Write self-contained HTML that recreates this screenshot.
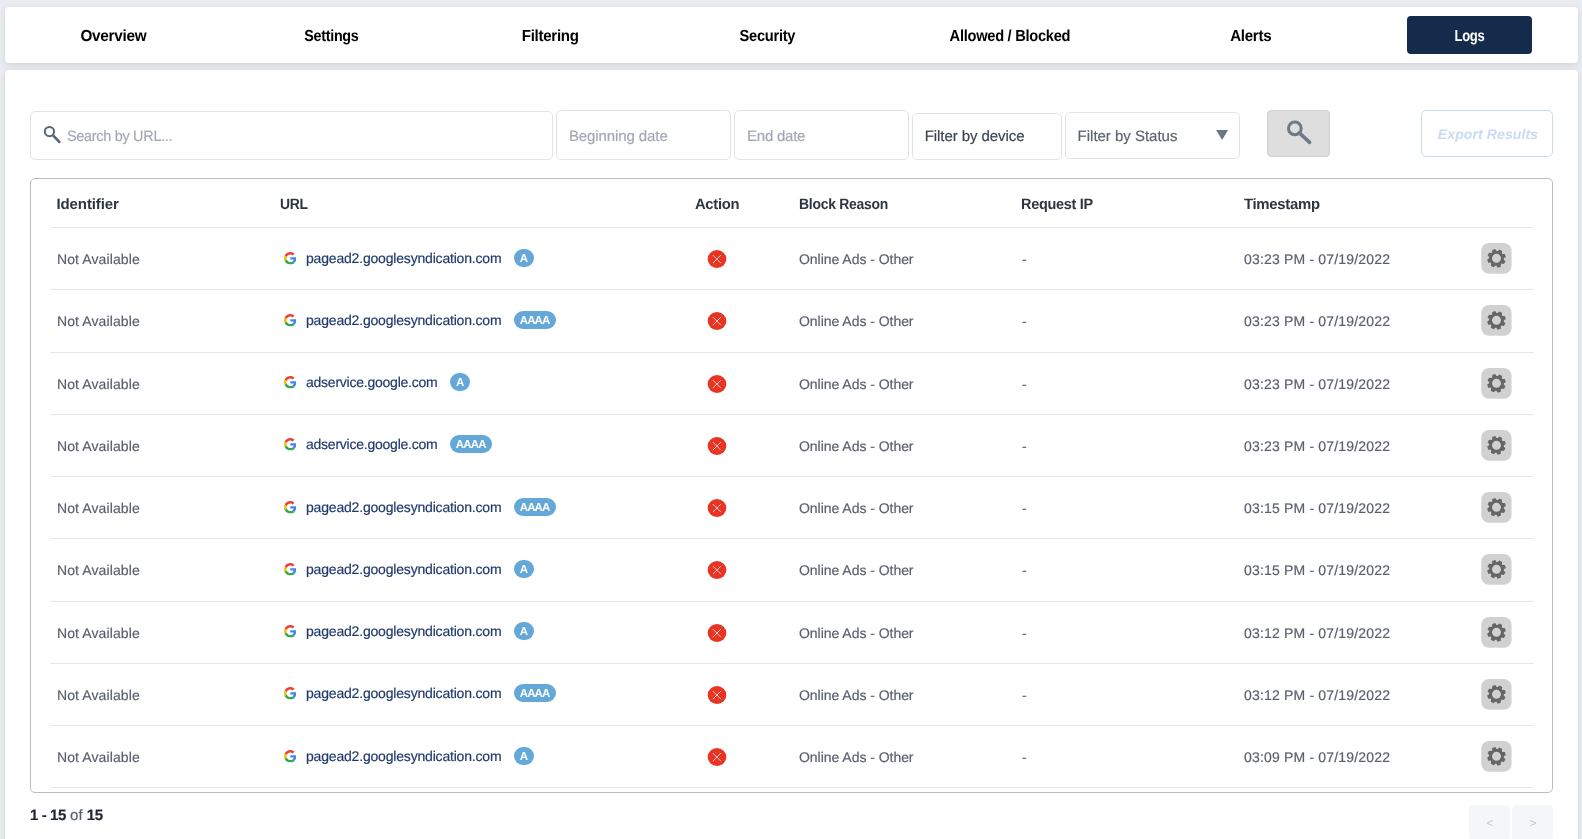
<!DOCTYPE html>
<html lang="en"><head><meta charset="utf-8"><title>Logs</title>
<style>
*{box-sizing:border-box}
html,body{margin:0;padding:0}
body{text-rendering:geometricPrecision;width:1582px;height:839px;overflow:hidden;position:relative;background:#e9edf1;font-family:"Liberation Sans",sans-serif;color:#555b69;font-size:14px}
.card{will-change:transform;position:absolute;background:#fff;border-radius:4px;box-shadow:0 2px 6px rgba(50,60,80,.14)}
.nav{left:5px;top:7px;width:1573px;height:55.5px}
.main{left:5px;top:70px;width:1573px;height:800px}
.main>*{margin-left:-5px;margin-top:-70px}
.tab{position:absolute;top:9px;height:37.5px;border-radius:4px;display:flex;align-items:center;justify-content:center;font-weight:bold;font-size:16px;color:#000;white-space:nowrap;padding-top:5px}
.tab.active{background:#152b4b;color:#fff}
.inp{position:absolute;border:1px solid #e0e4e8;border-radius:5px;background:#fff}
.ph{position:absolute;line-height:18px;font-size:15px;color:#a4a7b4;white-space:nowrap}
.ph.dev{color:#3b4350}
.ph.sta{color:#5c6370}
.sbtn{position:absolute;left:1267px;top:110px;width:63px;height:47px;background:#dedede;border:1px solid #cbd2d8;border-radius:4px;display:flex;align-items:center;justify-content:center}
.ebtn{position:absolute;left:1421px;top:110px;width:132px;height:47px;border:1px solid #c9dcf7;border-radius:5px;display:flex;align-items:center;justify-content:center;padding-left:2px;color:#cadaf4;font-weight:bold;font-style:italic;font-size:14px;white-space:nowrap}
.tbl{position:absolute;left:30px;top:178px;width:1523px;height:615px;border:1px solid #bcbcbc;border-radius:5px;overflow:hidden}
.tbl>*{margin-left:-31px;margin-top:-179px}
.th{position:absolute;top:196px;font-weight:bold;font-size:15px;color:#2c3541;white-space:nowrap;line-height:18px}
.hr{position:absolute;left:50px;width:1484px;height:1px;background:#e6e6e6}
.row{position:absolute;left:0;width:1582px;height:0}
.td{position:absolute;top:-9px;line-height:18px;font-size:14px;white-space:nowrap;color:#595f6d}
.td.url{left:306px;color:#1f3a6d}
.g{position:absolute;left:283.6px;width:12.6px;height:12.6px}
.badge{-webkit-text-stroke:0;position:absolute;top:0;margin-left:12.6px;height:18px;width:20px;border-radius:9px;background:#63a8d8;color:#fff;font-size:11.5px;font-weight:bold;line-height:20.6px;overflow:hidden;text-align:center}
.badge.b4{width:42px;letter-spacing:-0.85px;text-indent:-0.8px}
.x{position:absolute;left:707.3px;top:-9.9px;width:20px;height:20px}
.x svg{display:block}
.gb{position:absolute;left:1481px;display:block}
.cnt{position:absolute;left:30px;top:807px;font-size:15px;color:#5a6070;line-height:18px;white-space:nowrap}
.cnt .b{color:#1f2630;font-weight:bold}
.pg{position:absolute;top:805px;width:41px;height:35px;background:#f5f6f8;border-radius:4px;color:#c3c6cd;font-size:12px;text-align:center;line-height:36px;text-indent:1px}
span{transform-origin:left center}
.tab span{transform-origin:center center}
.ebtn span{transform-origin:center center}
.ico{position:absolute;display:block}
.td,.ph,.cnt{-webkit-text-stroke:.18px currentColor}

</style></head>
<body>
<svg width="0" height="0" style="position:absolute"><defs>
<symbol id="gear" viewBox="0 0 20 20"><path fill-rule="evenodd" d="M11.28 2.71 L12.84 1.04 L15.71 2.53 L15.24 4.77 L16.06 5.75 L18.35 5.67 L19.32 8.76 L17.40 10.01 L17.29 11.28 L18.96 12.84 L17.47 15.71 L15.23 15.24 L14.25 16.06 L14.33 18.35 L11.24 19.32 L9.99 17.40 L8.72 17.29 L7.16 18.96 L4.29 17.47 L4.76 15.23 L3.94 14.25 L1.65 14.33 L0.68 11.24 L2.60 9.99 L2.71 8.72 L1.04 7.16 L2.53 4.29 L4.77 4.76 L5.75 3.94 L5.67 1.65 L8.76 0.68 L10.01 2.60Z M5.50 10.00 a4.5 4.5 0 1 0 9.0 0 a4.5 4.5 0 1 0 -9.0 0Z"/></symbol>
<symbol id="goog" viewBox="0 0 48 48">
<path fill="#EA4335" d="M24 9.5c3.54 0 6.71 1.22 9.21 3.6l6.85-6.85C35.9 2.38 30.47 0 24 0 14.62 0 6.51 5.38 2.56 13.22l7.98 6.19C12.43 13.72 17.74 9.5 24 9.5z"/>
<path fill="#4285F4" d="M46.98 24.55c0-1.57-.15-3.09-.38-4.55H24v9.02h12.94c-.58 2.96-2.26 5.48-4.78 7.18l7.73 6c4.51-4.18 7.09-10.36 7.09-17.65z"/>
<path fill="#FBBC05" d="M10.53 28.59c-.48-1.45-.76-2.99-.76-4.59s.27-3.14.76-4.59l-7.98-6.19C.92 16.46 0 20.12 0 24c0 3.88.92 7.54 2.56 10.78l7.97-6.19z"/>
<path fill="#34A853" d="M24 48c6.48 0 11.93-2.13 15.89-5.81l-7.73-6c-2.15 1.45-4.92 2.3-8.16 2.3-6.26 0-11.57-4.22-13.47-9.91l-7.98 6.19C6.51 42.62 14.62 48 24 48z"/>
</symbol>
</defs></svg>
<div class="card nav">
<div class="tab" style="left:46.1px;width:125px"><span style="letter-spacing:-0.300px;display:inline-block;transform:scaleX(0.9570);">Overview</span></div>
<div class="tab" style="left:264.3px;width:125px"><span style="letter-spacing:-0.300px;display:inline-block;transform:scaleX(0.8958);">Settings</span></div>
<div class="tab" style="left:482.7px;width:125px"><span style="letter-spacing:-0.300px;display:inline-block;transform:scaleX(0.9419);">Filtering</span></div>
<div class="tab" style="left:700.3px;width:125px"><span style="letter-spacing:-0.300px;display:inline-block;transform:scaleX(0.9154);">Security</span></div>
<div class="tab" style="left:942.0px;width:125px"><span style="letter-spacing:-0.300px;display:inline-block;transform:scaleX(0.9149);">Allowed / Blocked</span></div>
<div class="tab" style="left:1183.1px;width:125px"><span style="letter-spacing:-0.300px;display:inline-block;transform:scaleX(0.9435);">Alerts</span></div>
<div class="tab active" style="left:1402.0px;width:125px"><span style="letter-spacing:-0.300px;display:inline-block;transform:scaleX(0.8158);">Logs</span></div>
</div>
<div class="card main">
<div class="inp" style="left:30px;top:111px;width:523px;height:49px"><span class="ph" style="left:36.3px;top:15.6px;letter-spacing:-0.300px;display:inline-block;transform:scaleX(0.9624);">Search by URL...</span></div>
<div class="inp" style="left:556px;top:110px;width:175px;height:50px"><span class="ph" style="left:11.9px;top:16.6px;letter-spacing:-0.092px;">Beginning date</span></div>
<div class="inp" style="left:734px;top:110px;width:175px;height:50px"><span class="ph" style="left:12.0px;top:16.6px;letter-spacing:-0.233px;">End date</span></div>
<div class="inp" style="left:912px;top:113px;width:150px;height:47px"><span class="ph dev" style="left:11.7px;top:13.7px;letter-spacing:-0.067px;">Filter by device</span></div>
<div class="inp" style="left:1065px;top:112px;width:175px;height:47px"><span class="ph sta" style="left:11.6px;top:14.7px;letter-spacing:-0.015px;">Filter by Status</span></div>
<div class="sbtn"></div>
<div class="ebtn"><span style="letter-spacing:0.106px;">Export Results</span></div>
<svg class="ico" style="left:38px;top:120px" width="30" height="30" viewBox="0 0 30 30"><circle cx="11.45" cy="11.55" r="4.65" fill="none" stroke="#5a6876" stroke-width="2"/><path d="M15.1 15.3 L21.3 21.9" stroke="#5a6876" stroke-width="2.7" stroke-linecap="round"/></svg>
<svg class="ico" style="left:1279px;top:113px" width="40" height="40" viewBox="0 0 40 40"><circle cx="15.85" cy="15.4" r="6.35" fill="none" stroke="#6d7a88" stroke-width="3"/><path d="M20.3 19.9 L30.6 29.4" stroke="#6d7a88" stroke-width="3.6" stroke-linecap="round"/></svg>
<svg class="ico" style="left:1207px;top:121px" width="30" height="30" viewBox="0 0 30 30"><path d="M9.1 9 L21.1 9 L15.1 19 Z" fill="#6b7785"/></svg>
<div class="tbl">
<span class="th" style="left:56.5px;letter-spacing:-0.114px;">Identifier</span>
<span class="th" style="left:279.5px;letter-spacing:-0.300px;display:inline-block;transform:scaleX(0.9289);">URL</span>
<span class="th" style="left:695px;letter-spacing:-0.300px;display:inline-block;transform:scaleX(0.9850);">Action</span>
<span class="th" style="left:798.7px;letter-spacing:-0.300px;display:inline-block;transform:scaleX(0.9309);">Block Reason</span>
<span class="th" style="left:1021.3px;letter-spacing:-0.300px;display:inline-block;transform:scaleX(0.9634);">Request IP</span>
<span class="th" style="left:1243.7px;letter-spacing:-0.300px;display:inline-block;transform:scaleX(0.9932);">Timestamp</span>
<div class="hr" style="top:227px"></div>
<div class="row" style="top:258.6px"><span class="td" style="left:57px;top:-8.65px;letter-spacing:0.102px;">Not Available</span><svg class="g" style="top:-6.20px"><use href="#goog"/></svg><span class="td url" style="top:-9.65px;"><span class="u" style="letter-spacing:-0.187px;">pagead2.googlesyndication.com</span><span class="badge">A</span></span><span class="x" style="top:-9.90px"><svg viewBox="0 0 20 20" width="20" height="20"><ellipse cx="10" cy="10" rx="9.35" ry="8.9" fill="#e83422"/><path d="M5.9 6.1 L13.9 14.1 M13.9 6.1 L5.9 14.1" stroke="#fff" stroke-opacity=".85" stroke-width=".9"/></svg></span><span class="td" style="left:799px;top:-8.65px;letter-spacing:-0.037px;">Online Ads - Other</span><span class="td" style="left:1022px;top:-8.65px;">-</span><span class="td" style="left:1244px;top:-8.65px;letter-spacing:0.174px;">03:23 PM - 07/19/2022</span><svg class="gb" style="top:-15.65px" width="32" height="33" viewBox="0 0 32 33"><rect x="0.25" y="0.05" width="30.3" height="30.7" rx="7.8" fill="#d1d1d1"/><use href="#gear" x="5.5" y="5.35" width="20" height="20" fill="#666"/></svg></div>
<div class="hr" style="top:289px"></div>
<div class="row" style="top:320.9px"><span class="td" style="left:57px;top:-8.95px;letter-spacing:0.102px;">Not Available</span><svg class="g" style="top:-6.50px"><use href="#goog"/></svg><span class="td url" style="top:-9.95px;"><span class="u" style="letter-spacing:-0.187px;">pagead2.googlesyndication.com</span><span class="badge b4">AAAA</span></span><span class="x" style="top:-10.20px"><svg viewBox="0 0 20 20" width="20" height="20"><ellipse cx="10" cy="10" rx="9.35" ry="8.9" fill="#e83422"/><path d="M5.9 6.1 L13.9 14.1 M13.9 6.1 L5.9 14.1" stroke="#fff" stroke-opacity=".85" stroke-width=".9"/></svg></span><span class="td" style="left:799px;top:-8.95px;letter-spacing:-0.037px;">Online Ads - Other</span><span class="td" style="left:1022px;top:-8.95px;">-</span><span class="td" style="left:1244px;top:-8.95px;letter-spacing:0.174px;">03:23 PM - 07/19/2022</span><svg class="gb" style="top:-15.95px" width="32" height="33" viewBox="0 0 32 33"><rect x="0.25" y="0.05" width="30.3" height="30.7" rx="7.8" fill="#d1d1d1"/><use href="#gear" x="5.5" y="5.35" width="20" height="20" fill="#666"/></svg></div>
<div class="hr" style="top:352px"></div>
<div class="row" style="top:383.2px"><span class="td" style="left:57px;top:-8.25px;letter-spacing:0.102px;">Not Available</span><svg class="g" style="top:-6.80px"><use href="#goog"/></svg><span class="td url" style="top:-10.25px;"><span class="u" style="letter-spacing:-0.234px;">adservice.google.com</span><span class="badge">A</span></span><span class="x" style="top:-9.50px"><svg viewBox="0 0 20 20" width="20" height="20"><ellipse cx="10" cy="10" rx="9.35" ry="8.9" fill="#e83422"/><path d="M5.9 6.1 L13.9 14.1 M13.9 6.1 L5.9 14.1" stroke="#fff" stroke-opacity=".85" stroke-width=".9"/></svg></span><span class="td" style="left:799px;top:-8.25px;letter-spacing:-0.037px;">Online Ads - Other</span><span class="td" style="left:1022px;top:-8.25px;">-</span><span class="td" style="left:1244px;top:-8.25px;letter-spacing:0.174px;">03:23 PM - 07/19/2022</span><svg class="gb" style="top:-15.25px" width="32" height="33" viewBox="0 0 32 33"><rect x="0.25" y="0.05" width="30.3" height="30.7" rx="7.8" fill="#d1d1d1"/><use href="#gear" x="5.5" y="5.35" width="20" height="20" fill="#666"/></svg></div>
<div class="hr" style="top:414px"></div>
<div class="row" style="top:445.5px"><span class="td" style="left:57px;top:-8.55px;letter-spacing:0.102px;">Not Available</span><svg class="g" style="top:-7.10px"><use href="#goog"/></svg><span class="td url" style="top:-10.55px;"><span class="u" style="letter-spacing:-0.234px;">adservice.google.com</span><span class="badge b4">AAAA</span></span><span class="x" style="top:-9.80px"><svg viewBox="0 0 20 20" width="20" height="20"><ellipse cx="10" cy="10" rx="9.35" ry="8.9" fill="#e83422"/><path d="M5.9 6.1 L13.9 14.1 M13.9 6.1 L5.9 14.1" stroke="#fff" stroke-opacity=".85" stroke-width=".9"/></svg></span><span class="td" style="left:799px;top:-8.55px;letter-spacing:-0.037px;">Online Ads - Other</span><span class="td" style="left:1022px;top:-8.55px;">-</span><span class="td" style="left:1244px;top:-8.55px;letter-spacing:0.174px;">03:23 PM - 07/19/2022</span><svg class="gb" style="top:-15.55px" width="32" height="33" viewBox="0 0 32 33"><rect x="0.25" y="0.05" width="30.3" height="30.7" rx="7.8" fill="#d1d1d1"/><use href="#gear" x="5.5" y="5.35" width="20" height="20" fill="#666"/></svg></div>
<div class="hr" style="top:476px"></div>
<div class="row" style="top:507.8px"><span class="td" style="left:57px;top:-8.85px;letter-spacing:0.102px;">Not Available</span><svg class="g" style="top:-6.40px"><use href="#goog"/></svg><span class="td url" style="top:-9.85px;"><span class="u" style="letter-spacing:-0.187px;">pagead2.googlesyndication.com</span><span class="badge b4">AAAA</span></span><span class="x" style="top:-10.10px"><svg viewBox="0 0 20 20" width="20" height="20"><ellipse cx="10" cy="10" rx="9.35" ry="8.9" fill="#e83422"/><path d="M5.9 6.1 L13.9 14.1 M13.9 6.1 L5.9 14.1" stroke="#fff" stroke-opacity=".85" stroke-width=".9"/></svg></span><span class="td" style="left:799px;top:-8.85px;letter-spacing:-0.037px;">Online Ads - Other</span><span class="td" style="left:1022px;top:-8.85px;">-</span><span class="td" style="left:1244px;top:-8.85px;letter-spacing:0.174px;">03:15 PM - 07/19/2022</span><svg class="gb" style="top:-15.85px" width="32" height="33" viewBox="0 0 32 33"><rect x="0.25" y="0.05" width="30.3" height="30.7" rx="7.8" fill="#d1d1d1"/><use href="#gear" x="5.5" y="5.35" width="20" height="20" fill="#666"/></svg></div>
<div class="hr" style="top:538px"></div>
<div class="row" style="top:570.1px"><span class="td" style="left:57px;top:-9.15px;letter-spacing:0.102px;">Not Available</span><svg class="g" style="top:-6.70px"><use href="#goog"/></svg><span class="td url" style="top:-10.15px;"><span class="u" style="letter-spacing:-0.187px;">pagead2.googlesyndication.com</span><span class="badge">A</span></span><span class="x" style="top:-10.40px"><svg viewBox="0 0 20 20" width="20" height="20"><ellipse cx="10" cy="10" rx="9.35" ry="8.9" fill="#e83422"/><path d="M5.9 6.1 L13.9 14.1 M13.9 6.1 L5.9 14.1" stroke="#fff" stroke-opacity=".85" stroke-width=".9"/></svg></span><span class="td" style="left:799px;top:-9.15px;letter-spacing:-0.037px;">Online Ads - Other</span><span class="td" style="left:1022px;top:-9.15px;">-</span><span class="td" style="left:1244px;top:-9.15px;letter-spacing:0.174px;">03:15 PM - 07/19/2022</span><svg class="gb" style="top:-16.15px" width="32" height="33" viewBox="0 0 32 33"><rect x="0.25" y="0.05" width="30.3" height="30.7" rx="7.8" fill="#d1d1d1"/><use href="#gear" x="5.5" y="5.35" width="20" height="20" fill="#666"/></svg></div>
<div class="hr" style="top:601px"></div>
<div class="row" style="top:632.4px"><span class="td" style="left:57px;top:-8.45px;letter-spacing:0.102px;">Not Available</span><svg class="g" style="top:-7.00px"><use href="#goog"/></svg><span class="td url" style="top:-10.45px;"><span class="u" style="letter-spacing:-0.187px;">pagead2.googlesyndication.com</span><span class="badge">A</span></span><span class="x" style="top:-9.70px"><svg viewBox="0 0 20 20" width="20" height="20"><ellipse cx="10" cy="10" rx="9.35" ry="8.9" fill="#e83422"/><path d="M5.9 6.1 L13.9 14.1 M13.9 6.1 L5.9 14.1" stroke="#fff" stroke-opacity=".85" stroke-width=".9"/></svg></span><span class="td" style="left:799px;top:-8.45px;letter-spacing:-0.037px;">Online Ads - Other</span><span class="td" style="left:1022px;top:-8.45px;">-</span><span class="td" style="left:1244px;top:-8.45px;letter-spacing:0.174px;">03:12 PM - 07/19/2022</span><svg class="gb" style="top:-15.45px" width="32" height="33" viewBox="0 0 32 33"><rect x="0.25" y="0.05" width="30.3" height="30.7" rx="7.8" fill="#d1d1d1"/><use href="#gear" x="5.5" y="5.35" width="20" height="20" fill="#666"/></svg></div>
<div class="hr" style="top:663px"></div>
<div class="row" style="top:694.7px"><span class="td" style="left:57px;top:-8.75px;letter-spacing:0.102px;">Not Available</span><svg class="g" style="top:-7.30px"><use href="#goog"/></svg><span class="td url" style="top:-10.75px;"><span class="u" style="letter-spacing:-0.187px;">pagead2.googlesyndication.com</span><span class="badge b4">AAAA</span></span><span class="x" style="top:-10.00px"><svg viewBox="0 0 20 20" width="20" height="20"><ellipse cx="10" cy="10" rx="9.35" ry="8.9" fill="#e83422"/><path d="M5.9 6.1 L13.9 14.1 M13.9 6.1 L5.9 14.1" stroke="#fff" stroke-opacity=".85" stroke-width=".9"/></svg></span><span class="td" style="left:799px;top:-8.75px;letter-spacing:-0.037px;">Online Ads - Other</span><span class="td" style="left:1022px;top:-8.75px;">-</span><span class="td" style="left:1244px;top:-8.75px;letter-spacing:0.174px;">03:12 PM - 07/19/2022</span><svg class="gb" style="top:-15.75px" width="32" height="33" viewBox="0 0 32 33"><rect x="0.25" y="0.05" width="30.3" height="30.7" rx="7.8" fill="#d1d1d1"/><use href="#gear" x="5.5" y="5.35" width="20" height="20" fill="#666"/></svg></div>
<div class="hr" style="top:725px"></div>
<div class="row" style="top:757.0px"><span class="td" style="left:57px;top:-9.05px;letter-spacing:0.102px;">Not Available</span><svg class="g" style="top:-6.60px"><use href="#goog"/></svg><span class="td url" style="top:-10.05px;"><span class="u" style="letter-spacing:-0.187px;">pagead2.googlesyndication.com</span><span class="badge">A</span></span><span class="x" style="top:-10.30px"><svg viewBox="0 0 20 20" width="20" height="20"><ellipse cx="10" cy="10" rx="9.35" ry="8.9" fill="#e83422"/><path d="M5.9 6.1 L13.9 14.1 M13.9 6.1 L5.9 14.1" stroke="#fff" stroke-opacity=".85" stroke-width=".9"/></svg></span><span class="td" style="left:799px;top:-9.05px;letter-spacing:-0.037px;">Online Ads - Other</span><span class="td" style="left:1022px;top:-9.05px;">-</span><span class="td" style="left:1244px;top:-9.05px;letter-spacing:0.174px;">03:09 PM - 07/19/2022</span><svg class="gb" style="top:-16.05px" width="32" height="33" viewBox="0 0 32 33"><rect x="0.25" y="0.05" width="30.3" height="30.7" rx="7.8" fill="#d1d1d1"/><use href="#gear" x="5.5" y="5.35" width="20" height="20" fill="#666"/></svg></div>
<div class="hr" style="top:787px"></div>
</div>
<div class="cnt"><span class="b" style="letter-spacing:-0.410px;">1 - 15</span> of <span class="b" style="letter-spacing:-0.244px;">15</span></div>
<div class="pg" style="left:1469px"><span>&lt;</span></div><div class="pg" style="left:1512px"><span>&gt;</span></div>
</div>
</body></html>
